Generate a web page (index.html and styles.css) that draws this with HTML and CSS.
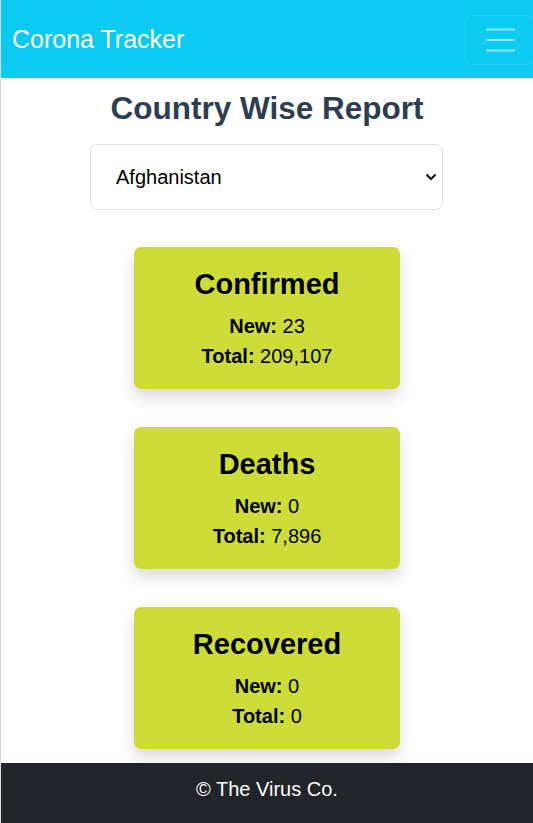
FILE: index.html
```html
<!DOCTYPE html>
<html lang="en">
<head>
<meta charset="utf-8">
<title>Corona Tracker</title>
<link rel="stylesheet" href="styles.css">
</head>
<body>
<div class="page">
  <nav class="navbar">
    <span class="brand">Corona Tracker</span>
    <button class="toggler" type="button" aria-label="Toggle navigation">
      <svg width="30" height="30" viewBox="0 0 30 30" aria-hidden="true">
        <path d="M1 4.5h29M1 15h29M1 25.5h29" stroke="rgba(255,255,255,0.55)" stroke-width="2.2" stroke-linecap="butt" fill="none"/>
      </svg>
    </button>
  </nav>
  <main class="content">
    <h1 class="title">Country Wise Report</h1>
    <div class="select-wrap">
      <select class="country">
        <option>Afghanistan</option>
      </select>
      <svg class="chevron" width="12" height="8" viewBox="0 0 12 8" aria-hidden="true">
        <path d="M1.5 1.5l4.5 4.5 4.5-4.5" stroke="#000" stroke-width="2" fill="none"/>
      </svg>
    </div>
    <div class="cards">
      <div class="card">
        <h2 class="card-title">Confirmed</h2>
        <p class="line"><b>New:</b> 23</p>
        <p class="line"><b>Total:</b> 209,107</p>
      </div>
      <div class="card">
        <h2 class="card-title">Deaths</h2>
        <p class="line"><b>New:</b> 0</p>
        <p class="line"><b>Total:</b> 7,896</p>
      </div>
      <div class="card">
        <h2 class="card-title">Recovered</h2>
        <p class="line"><b>New:</b> 0</p>
        <p class="line"><b>Total:</b> 0</p>
      </div>
    </div>
  </main>
  <footer class="footer">© The Virus Co.</footer>
</div>
</body>
</html>
```
FILE: styles.css
```css
* { box-sizing: border-box; }
html, body { margin: 0; padding: 0; }
body {
  font-family: "Liberation Sans", Arial, sans-serif;
  background: #fff;
  color: #000;
  overflow: hidden;
}
.page {
  border-left: 1px solid #dcdcdc;
  min-height: 823px;
  display: flex;
  flex-direction: column;
}
.navbar {
  height: 78px;
  background: #0dcaf0;
  display: flex;
  align-items: center;
  justify-content: space-between;
  padding-left: 11px;
}
.brand {
  color: #fff;
  font-size: 25px;
  line-height: 1;
}
.toggler {
  width: 69px;
  height: 50px;
  margin-top: 1px;
  margin-right: -1px;
  background: transparent;
  border: 1px solid rgba(255,255,255,0.1);
  border-radius: 6px;
  display: flex;
  align-items: center;
  justify-content: center;
  padding: 0 0 0 1px;
}
.toggler svg { display: block; }
.content {
  display: flex;
  flex-direction: column;
  align-items: center;
  padding-top: 15px;
}
.title {
  margin: 0;
  font-size: 31.5px;
  font-weight: 700;
  color: #2c3e50;
  line-height: 30px;
}
.select-wrap {
  position: relative;
  margin-top: 21px;
  margin-left: -1px;
  width: 353px;
}
.country {
  width: 100%;
  height: 66px;
  appearance: none;
  -webkit-appearance: none;
  background: #fff;
  border: 1px solid #dee2e6;
  border-radius: 7px;
  font-family: "Liberation Sans", Arial, sans-serif;
  font-size: 20px;
  color: #000;
  padding: 0 40px 0 25px;
}
.chevron {
  position: absolute;
  right: 6px;
  top: 29px;
}
.cards {
  display: flex;
  flex-direction: column;
  align-items: center;
  gap: 38px;
  margin-top: 37px;
}
.card {
  width: 266px;
  height: 142px;
  background: #cddc39;
  border-radius: 7px;
  box-shadow: 0 8px 16px rgba(0,0,0,0.15);
  text-align: center;
  padding-top: 21px;
}
.card-title {
  margin: 0 0 11px;
  font-size: 29px;
  font-weight: 700;
  line-height: 32px;
}
.line {
  margin: 0;
  font-size: 20px;
  line-height: 30px;
}
.footer {
  margin-top: auto;
  height: 60px;
  background: #212529;
  color: #fff;
  font-size: 20px;
  text-align: center;
  padding-top: 15px;
}
```
